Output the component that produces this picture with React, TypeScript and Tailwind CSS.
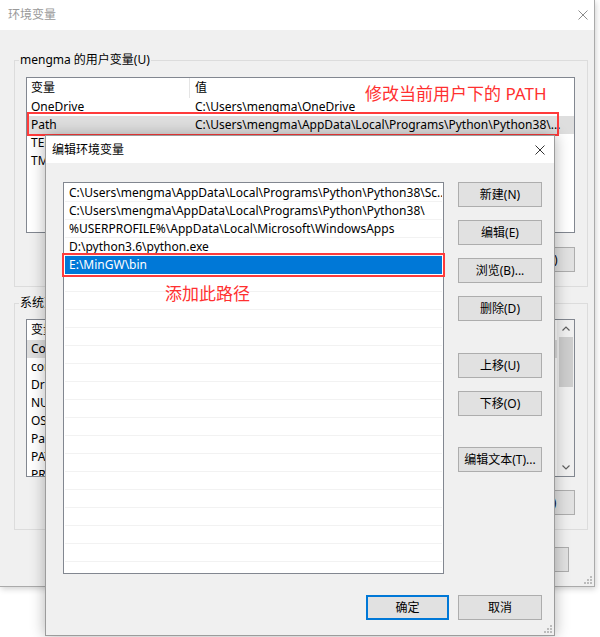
import React from "react";

const userVars: [string, string][] = [
  ["OneDrive", "C:\\Users\\mengma\\OneDrive"],
  ["Path", "C:\\Users\\mengma\\AppData\\Local\\Programs\\Python\\Python38\\..."],
  ["TEMP", "%USERPROFILE%\\AppData\\Local\\Temp"],
  ["TMP", "%USERPROFILE%\\AppData\\Local\\Temp"],
];

const sysVars: [string, string][] = [
  ["ComSpec", "C:\\Windows\\system32\\cmd.exe"],
  ["configsetroot", "C:\\Windows\\ConfigSetRoot"],
  ["DriverData", "C:\\Windows\\System32\\Drivers\\DriverData"],
  ["NUMBER_OF_PROCESSORS", "8"],
  ["OS", "Windows_NT"],
  ["Path", "C:\\Windows\\system32;C:\\Windows;..."],
  ["PATHEXT", ".COM;.EXE;.BAT;.CMD;.VBS;.VBE;.JS;..."],
  ["PROCESSOR_ARCHITECTURE", "AMD64"],
];

const pathEntries = [
  "C:\\Users\\mengma\\AppData\\Local\\Programs\\Python\\Python38\\Sc...",
  "C:\\Users\\mengma\\AppData\\Local\\Programs\\Python\\Python38\\",
  "%USERPROFILE%\\AppData\\Local\\Microsoft\\WindowsApps",
  "D:\\python3.6\\python.exe",
  "E:\\MinGW\\bin",
];

function CloseIcon({ color }: { color: string }) {
  return (
    <svg width="10" height="10" viewBox="0 0 10 10">
      <path d="M0.5 0.5L9.5 9.5M9.5 0.5L0.5 9.5" stroke={color} strokeWidth="1" fill="none" />
    </svg>
  );
}

function Grip() {
  const dots = [
    [8, 2],
    [5, 5],
    [8, 5],
    [2, 8],
    [5, 8],
    [8, 8],
  ];
  return (
    <svg width="10" height="10" viewBox="0 0 10 10">
      {dots.map(([x, y], i) => (
        <rect key={i} x={x} y={y} width="2" height="2" fill="#bcbcbc" />
      ))}
    </svg>
  );
}

function Chevron({ up }: { up?: boolean }) {
  return (
    <svg width="8" height="5" viewBox="0 0 8 5">
      <path d={up ? "M0.5 4.5L4 1L7.5 4.5" : "M0.5 0.5L4 4L7.5 0.5"} stroke="#606060" strokeWidth="1.2" fill="none" />
    </svg>
  );
}

function WinButton({ label, className }: { label: string; className: string }) {
  return (
    <div className={`h-[25px] shrink-0 flex items-center justify-center text-[12px] text-black bg-[#e1e1e1] ${className}`}>
      {label}
    </div>
  );
}

function VarList({ rows, highlight, scroll, height }: { rows: [string, string][]; highlight: number; scroll?: boolean; height: string }) {
  return (
    <div className={`relative bg-white border border-[#828790] overflow-hidden ${height}`}>
      <div className="h-[20px] flex text-[12px] text-black">
        <div className="w-[163px] pl-[4px] flex items-center border-r border-[#e5e5e5]">变量</div>
        <div className="flex-1 pl-[5px] flex items-center">值</div>
      </div>
      {rows.map(([name, value], i) => (
        <div
          key={name}
          className={`h-[18px] flex items-center text-[12px] text-black whitespace-nowrap ${i === highlight ? "bg-[#dedede]" : ""}`}
        >
          <div className="w-[163px] pl-[4px] overflow-hidden">{name}</div>
          <div className="flex-1 pl-[5px] overflow-hidden">{value}</div>
        </div>
      ))}
      {scroll && (
        <div className="absolute right-0 top-0 bottom-0 w-[17px] bg-[#f0f0f0] flex flex-col items-center">
          <div className="h-[17px] flex items-center justify-center">
            <Chevron up />
          </div>
          <div className="w-[14px] h-[50px] bg-[#cdcdcd]" />
          <div className="flex-1" />
          <div className="h-[17px] flex items-center justify-center">
            <Chevron />
          </div>
        </div>
      )}
    </div>
  );
}

export default function App() {
  return (
    <div className="relative w-[600px] h-[637px] bg-white overflow-hidden font-['Noto_Sans','Noto_Sans_CJK_SC',sans-serif]">
      {/* 环境变量 window (behind) */}
      <div className="absolute left-0 top-0 w-[595px] h-[587px] flex flex-col bg-[#f0f0f0] border-r border-b border-[#aaaaaa] shadow-[1px_2px_6px_rgba(0,0,0,0.18)]">
        <div className="h-[30px] shrink-0 bg-white flex items-center justify-between pl-[8px] pr-[6px]">
          <span className="text-[12px] text-[#999999]">环境变量</span>
          <CloseIcon color="#8c8c8c" />
        </div>
        <div className="flex flex-col pl-[14px] pr-[6px]">
          <fieldset className="mt-[22px] border border-[#dcdcdc]">
            <legend className="ml-[4px] px-[1px] text-[12px] leading-[16px] text-black">mengma 的用户变量(U)</legend>
            <div className="pl-[11px] pr-[12px] pt-[9px] pb-[14px]">
              <VarList rows={userVars} highlight={1} height="h-[156px]" />
              <div className="mt-[14px] flex justify-end gap-[9px]">
                <WinButton label="新建(N)..." className="w-[75px] border border-[#adadad]" />
                <WinButton label="编辑(E)..." className="w-[75px] border border-[#adadad]" />
                <WinButton label="删除(D)" className="w-[75px] border border-[#adadad]" />
              </div>
            </div>
          </fieldset>
          <fieldset className="mt-[8px] border border-[#dcdcdc]">
            <legend className="ml-[4px] px-[1px] text-[12px] leading-[16px] text-black">系统变量(S)</legend>
            <div className="pl-[11px] pr-[12px] pt-[8px] pb-[14px]">
              <VarList rows={sysVars} highlight={0} scroll height="h-[158px]" />
              <div className="mt-[13px] flex justify-end gap-[9px]">
                <WinButton label="新建(W)..." className="w-[75px] border border-[#adadad]" />
                <WinButton label="编辑(I)..." className="w-[75px] border border-[#adadad]" />
                <WinButton label="删除(L)" className="w-[75px] border border-[#adadad]" />
              </div>
            </div>
          </fieldset>
          <div className="mt-[17px] mr-[19px] flex justify-end gap-[9px]">
            <WinButton label="确定" className="w-[75px] border border-[#adadad]" />
            <WinButton label="取消" className="w-[75px] border border-[#adadad]" />
          </div>
        </div>
        <div className="absolute right-[2px] bottom-[2px]">
          <Grip />
        </div>
      </div>

      {/* highlight box on Path */}
      <div className="absolute left-[27px] top-[112px] w-[532px] h-[24px] border-2 border-[#ff3b3b]" />
      <div className="absolute left-[365px] top-[85px] text-[17px] leading-[17px] text-[#ff3030] whitespace-nowrap">
        修改当前用户下的 PATH
      </div>

      {/* 编辑环境变量 dialog */}
      <div className="absolute left-[45px] top-[135px] w-[510px] h-[501px] flex flex-col bg-[#f0f0f0] border border-[#9c9c9c] shadow-[0_0_14px_rgba(0,0,0,0.3)]">
        <div className="h-[27px] shrink-0 bg-white flex items-center justify-between pl-[6px] pr-[9px]">
          <span className="text-[12px] text-black">编辑环境变量</span>
          <CloseIcon color="#333333" />
        </div>
        <div className="flex pt-[19px] pl-[17px]">
          <div className="w-[381px] h-[392px] bg-white border border-[#828790] p-[1px] overflow-hidden">
            {Array.from({ length: 22 }).map((_, i) => {
              const text = pathEntries[i] ?? "";
              const sel = i === 4;
              return (
                <div
                  key={i}
                  className={`h-[18px] flex items-center pl-[4px] text-[12px] whitespace-nowrap overflow-hidden border-b ${
                    sel ? "bg-[#0078d7] text-white border-[#0078d7]" : "text-black border-[#f2f2f2]"
                  }`}
                >
                  {text}
                </div>
              );
            })}
          </div>
          <div className="ml-[14px] w-[84px] flex flex-col">
            <WinButton label="新建(N)" className="w-[84px] border border-[#adadad]" />
            <WinButton label="编辑(E)" className="mt-[13px] w-[84px] border border-[#adadad]" />
            <WinButton label="浏览(B)..." className="mt-[13px] w-[84px] border border-[#adadad]" />
            <WinButton label="删除(D)" className="mt-[13px] w-[84px] border border-[#adadad]" />
            <WinButton label="上移(U)" className="mt-[32px] w-[84px] border border-[#adadad]" />
            <WinButton label="下移(O)" className="mt-[13px] w-[84px] border border-[#adadad]" />
            <WinButton label="编辑文本(T)..." className="mt-[31px] w-[84px] border border-[#adadad]" />
          </div>
        </div>
        <div className="mt-[21px] pr-[12px] flex justify-end gap-[9px]">
          <WinButton label="确定" className="w-[83px] border-2 border-[#0078d7]" />
          <WinButton label="取消" className="w-[84px] border border-[#adadad]" />
        </div>
        <div className="absolute right-[2px] bottom-[2px]">
          <Grip />
        </div>
      </div>

      {/* annotations on the edit dialog */}
      <div className="absolute left-[62px] top-[253px] w-[383px] h-[24px] border-2 border-[#ff3b3b]" />
      <div className="absolute left-[165px] top-[285px] text-[17px] leading-[17px] text-[#ff3030] whitespace-nowrap">添加此路径</div>
    </div>
  );
}
